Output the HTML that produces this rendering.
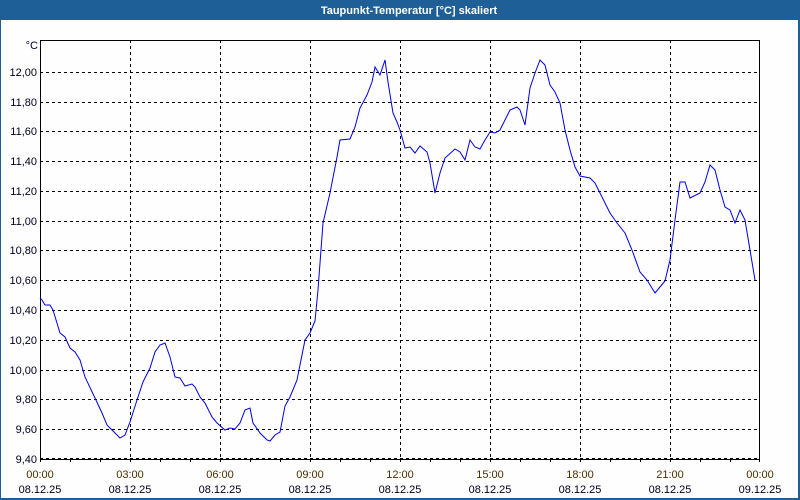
<!DOCTYPE html>
<html><head><meta charset="utf-8"><style>
html,body{margin:0;padding:0;width:800px;height:500px;overflow:hidden;background:#fff}
svg{display:block}
text{font-family:"Liberation Sans",sans-serif;font-size:11px}
</style></head><body>
<svg width="800" height="500" xmlns="http://www.w3.org/2000/svg">
<rect x="0" y="0" width="800" height="500" fill="#1d5f96"/>
<rect x="1" y="20" width="797" height="478" fill="#fdfefd"/>
<text x="409" y="14" fill="#fff" font-weight="bold" text-anchor="middle">Taupunkt-Temperatur [°C] skaliert</text>
<g stroke="#000" stroke-width="1" stroke-dasharray="3,3" shape-rendering="crispEdges">
<line x1="40" x2="760" y1="72.5" y2="72.5"/><line x1="40" x2="760" y1="102.5" y2="102.5"/>
<line x1="40" x2="760" y1="131.5" y2="131.5"/><line x1="40" x2="760" y1="161.5" y2="161.5"/>
<line x1="40" x2="760" y1="191.5" y2="191.5"/><line x1="40" x2="760" y1="221.5" y2="221.5"/>
<line x1="40" x2="760" y1="250.5" y2="250.5"/><line x1="40" x2="760" y1="280.5" y2="280.5"/>
<line x1="40" x2="760" y1="310.5" y2="310.5"/><line x1="40" x2="760" y1="340.5" y2="340.5"/>
<line x1="40" x2="760" y1="370.5" y2="370.5"/><line x1="40" x2="760" y1="399.5" y2="399.5"/>
<line x1="40" x2="760" y1="429.5" y2="429.5"/><line x1="40" x2="760" y1="458.5" y2="458.5"/>
<line y1="40" y2="459" x1="130.5" x2="130.5"/><line y1="40" y2="459" x1="220.5" x2="220.5"/>
<line y1="40" y2="459" x1="310.5" x2="310.5"/><line y1="40" y2="459" x1="400.5" x2="400.5"/>
<line y1="40" y2="459" x1="490.5" x2="490.5"/><line y1="40" y2="459" x1="580.5" x2="580.5"/>
<line y1="40" y2="459" x1="670.5" x2="670.5"/>
</g>
<g stroke="#000" shape-rendering="crispEdges">
<path d="M40.5 459V40.5H759.5V459.5H40.5" fill="none"/>
<path d="M70.5 459v3M100.5 459v3M130.5 459v3M160.5 459v3M190.5 459v3M220.5 459v3M250.5 459v3M280.5 459v3M310.5 459v3M340.5 459v3M370.5 459v3M400.5 459v3M430.5 459v3M460.5 459v3M490.5 459v3M520.5 459v3M550.5 459v3M580.5 459v3M610.5 459v3M640.5 459v3M670.5 459v3M700.5 459v3M730.5 459v3M759.5 459v3M40.5 459v3"/>
</g>
<polyline fill="none" stroke="#0000ee" stroke-width="1" points="40,298 42,300 45,305 50,305 53,310 60,333 65,337 70,348 75,352 80,360 85,377 95,398 102,413 107,425 112,430 120,438 125,435 130,422 137,400 143,382 150,368 155,352 160,345 165,343 170,357 175,377 180,378 185,386 192,384 195,387 200,397 205,403 212,417 217,423 225,430 230,428 235,429 240,423 245,410 250,408 253,423 260,433 267,440 270,441 275,435 280,432 285,406 290,397 297,380 305,340 310,333 315,321 318,290 323,223 330,193 337,157 340,140 350,139 355,127 360,108 367,95 372,82 375,67 380,75 385,60 388,82 393,113 397,122 400,130 405,148 410,147 415,153 420,146 427,152 430,163 435,193 440,173 445,158 455,149 460,152 465,160 470,140 475,147 480,149 485,140 490,132 495,133 500,130 505,120 510,110 517,107 520,110 525,125 530,88 535,73 540,60 545,65 550,85 555,92 560,103 565,130 570,150 575,167 580,176 590,178 595,183 602,197 610,213 617,223 625,233 632,250 640,272 647,280 655,293 665,281 670,260 675,220 680,182 685,182 690,198 700,193 705,182 710,165 715,170 720,190 725,207 730,210 735,223 740,210 745,220 750,250 755,280"/>
<g fill="#000020" text-anchor="end">
<text x="38" y="49">°C</text>
<text x="37" y="76">12,00</text><text x="37" y="106">11,80</text><text x="37" y="135">11,60</text>
<text x="37" y="165">11,40</text><text x="37" y="195">11,20</text><text x="37" y="225">11,00</text>
<text x="37" y="254">10,80</text><text x="37" y="284">10,60</text><text x="37" y="314">10,40</text>
<text x="37" y="344">10,20</text><text x="37" y="374">10,00</text><text x="37" y="403">9,80</text>
<text x="37" y="433">9,60</text><text x="37" y="463">9,40</text>
</g>
<g fill="#4a3000" text-anchor="middle">
<text x="40" y="478">00:00</text><text x="130" y="478">03:00</text><text x="220" y="478">06:00</text>
<text x="310" y="478">09:00</text><text x="400" y="478">12:00</text><text x="490" y="478">15:00</text>
<text x="580" y="478">18:00</text><text x="670" y="478">21:00</text><text x="760" y="478">00:00</text>
</g>
<g fill="#000020" text-anchor="middle">
<text x="40" y="493">08.12.25</text><text x="130" y="493">08.12.25</text><text x="220" y="493">08.12.25</text>
<text x="310" y="493">08.12.25</text><text x="400" y="493">08.12.25</text><text x="490" y="493">08.12.25</text>
<text x="580" y="493">08.12.25</text><text x="670" y="493">08.12.25</text><text x="760" y="493">09.12.25</text>
</g>
</svg>
</body></html>
